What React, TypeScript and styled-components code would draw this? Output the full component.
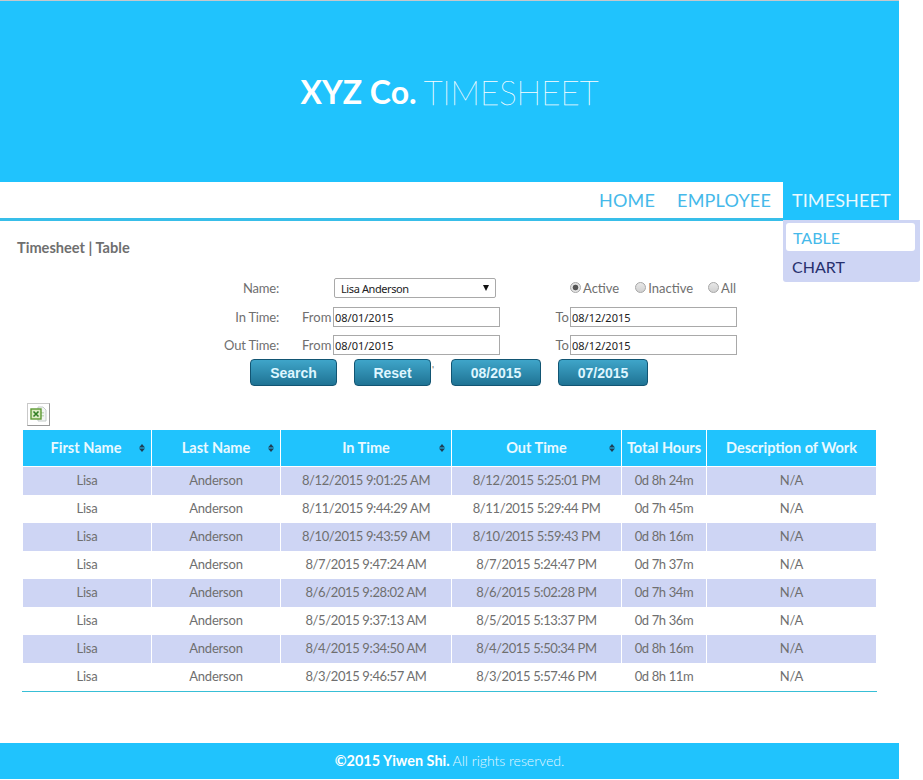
import React from 'react';
import styled, { createGlobalStyle } from 'styled-components';

const GlobalStyle = createGlobalStyle`
    html, body {
        margin: 0;
        padding: 0;
        background: #fff;
        font-family: Lato, "Open Sans", sans-serif;
        overflow: hidden;
    }
`;

const Page = styled.div`
    width: 899px;
    height: 780px;
    border-top: 1px solid #c4c8cc;
    box-sizing: border-box;
`;

const Banner = styled.header`
    height: 181px;
    background: #20c3fd;
    display: flex;
    align-items: center;
    justify-content: center;
    color: #fff;
`;

const BrandBold = styled.span`
    font-size: 32px;
    font-weight: 700;
    margin-right: 7px;
`;

const BrandLight = styled.span`
    font-size: 33px;
    font-weight: 100;
    color: #fff;
    -webkit-text-stroke: 0.25px #fff;
`;

const Nav = styled.nav`
    height: 36px;
    border-bottom: 3px solid #38bee9;
    display: flex;
    justify-content: flex-end;
    gap: 22px;
`;

const NavItem = styled.div`
    height: 36px;
    font-size: 18px;
    line-height: 36px;
    white-space: nowrap;
    color: #45b9ea;
    letter-spacing: 0.2px;
`;

const ActiveNavItem = styled(NavItem)`
    position: relative;
    height: 38px;
    width: 116px;
    margin-left: -10px;
    padding-left: 9px;
    box-sizing: border-box;
    color: #e9f9ff;
    background: #20c3fd;
    letter-spacing: 0.1px;
`;

const Dropdown = styled.div`
    position: absolute;
    top: 38px;
    left: 0;
    width: 137px;
    height: 62px;
    padding: 3px;
    box-sizing: border-box;
    background: #ced5f4;
    border-radius: 0 0 3px 3px;
    font-size: 16px;
    letter-spacing: 0;
`;

const DropItem = styled.div`
    height: 31px;
    line-height: 32px;
    padding-left: 6px;
    color: #27306e;
`;

const ActiveDropItem = styled(DropItem)`
    height: 28px;
    width: 129px;
    line-height: 30px;
    padding-left: 7px;
    box-sizing: border-box;
    border-radius: 3px;
    color: #45b9ea;
    background: #fff;
`;

const Content = styled.main`
    height: 522px;
    box-sizing: border-box;
`;

const Crumb = styled.h2`
    margin: 0;
    padding: 18px 0 0 17px;
    height: 57px;
    box-sizing: border-box;
    font-size: 14.6px;
    line-height: 17px;
    font-weight: 700;
    color: #6f6f6f;
`;

const FilterGrid = styled.div`
    display: grid;
    grid-template-columns: 79px 23px 31px 167px 70px 167px;
    grid-template-rows: 29px 28px 28px;
    margin-left: 200px;
    width: 537px;
    font-size: 13px;
    color: #6f6f6f;
`;

const Label = styled.div`
    text-align: right;
    line-height: 20px;
    white-space: nowrap;
`;

const LabelCell = styled(Label)`
    grid-column: 1;
    letter-spacing: -0.2px;
`;

const FromCell = styled(Label)`
    grid-column: 2 / 4;
    text-align: left;
    padding-left: 23px;
`;

const ToCell = styled(Label)`
    padding-right: 1px;
`;

const DateInput = styled.input`
    width: 167px;
    height: 20px;
    box-sizing: border-box;
    border: 1px solid #a9a9a9;
    padding: 1px 1px 0;
    margin: 0;
    font-family: "Noto Sans", sans-serif;
    font-size: 11px;
    color: #222;
    background: #fff;
    outline: none;
`;

const SelectWrap = styled.div`
    grid-column: 3 / 5;
    position: relative;
    margin-left: 32px;
    width: 162px;
    height: 20px;
`;

const NameSelect = styled.select`
    appearance: none;
    width: 162px;
    height: 20px;
    box-sizing: border-box;
    border: 1px solid #a9a9a9;
    border-radius: 2px;
    padding: 1px 0 0 6px;
    margin: 0;
    font-family: "Noto Sans", sans-serif;
    font-size: 11px;
    letter-spacing: -0.4px;
    color: #222;
    background: #fff;
`;

const SelectArrow = styled.svg`
    position: absolute;
    top: 7px;
    right: 7px;
    width: 6px;
    height: 6px;
    pointer-events: none;
`;

const RadioRow = styled.div`
    grid-column: 5 / 7;
    display: flex;
    align-items: flex-start;
    padding-left: 70px;
    line-height: 20px;
`;

const RadioItem = styled.label<{ $gap: number }>`
    display: flex;
    margin-right: ${p => p.$gap}px;
`;

const Radio = styled.input`
    appearance: none;
    width: 9px;
    height: 9px;
    margin: 4px 2px 0 0;
    border: 1px solid #a6a6a6;
    border-radius: 50%;
    box-sizing: content-box;
    background: linear-gradient(#e8e8e8, #d0d0d0);

    &:checked {
        background: radial-gradient(circle, #555 0 2.5px, #e4e4e4 3.2px);
    }
`;

const ButtonRow = styled.div`
    display: flex;
    margin: -4px 0 0 250px;
    height: 27px;
`;

const ActionButton = styled.button<{ $width: number; $gap: number }>`
    width: ${p => p.$width}px;
    margin-right: ${p => p.$gap}px;
    height: 27px;
    padding: 0;
    box-sizing: border-box;
    border: 1px solid #125573;
    border-radius: 4px;
    background: linear-gradient(#3fa5c9, #1f7394);
    color: #dff6ff;
    font-family: "Liberation Sans", Arial, sans-serif;
    font-size: 14px;
    font-weight: 700;
`;

const StrayMark = styled.span`
    width: 20px;
    padding-left: 1px;
    box-sizing: border-box;
    font-size: 10px;
    line-height: 20px;
    color: #666;
`;

const ExportRow = styled.div`
    margin: 17px 0 4px 27px;
    height: 23px;
`;

const ExportIcon = styled.div`
    width: 23px;
    height: 23px;
    box-sizing: border-box;
    border: 1px solid #c9c9c9;
    border-right-color: #999;
    border-bottom-color: #999;
    background: #fff;
    display: flex;
    align-items: center;
    justify-content: center;
`;

const Table = styled.table`
    margin-left: 22px;
    width: 855px;
    table-layout: fixed;
    border-collapse: separate;
    border-spacing: 0;
`;

const HeadCell = styled.th<{ $width: number }>`
    position: relative;
    width: ${p => p.$width}px;
    height: 37px;
    padding: 0 0 1px;
    box-sizing: border-box;
    background: #20c3fd;
    color: #e9f9ff;
    font-weight: 700;
    font-size: 14.5px;
    white-space: nowrap;
    border-left: 1px solid #fff;
    border-bottom: 1px solid #fff;

    &:last-child {
        border-right: 1px solid #fff;
    }
`;

const HeadLabel = styled.span<{ $shift: number }>`
    display: inline-block;
    transform: translateX(${p => p.$shift}px);
`;

const SortIcon = styled.svg`
    position: absolute;
    right: 6px;
    top: 14px;
    width: 6px;
    height: 8px;
`;

const Row = styled.tr<{ $odd: boolean }>`
    background: ${p => (p.$odd ? '#ced5f4' : '#fff')};
`;

const Cell = styled.td<{ $tight?: boolean }>`
    height: 28px;
    padding: 0 0 2px;
    box-sizing: border-box;
    text-align: center;
    color: #6f6f6f;
    font-size: 13px;
    letter-spacing: ${p => (p.$tight ? '-0.38px' : '-0.2px')};
    white-space: nowrap;
    border-left: 1px solid #fff;

    &:last-child {
        border-right: 1px solid #fff;
    }
`;

const TableRule = styled.td`
    height: 1px;
    padding: 0;
    background: #38bfd6;
`;

const Footer = styled.footer`
    height: 36px;
    padding-bottom: 1px;
    box-sizing: border-box;
    background: #20c3fd;
    display: flex;
    align-items: center;
    justify-content: center;
    font-size: 14px;
    color: #e6f8ff;
`;

const FooterBold = styled.span`
    font-weight: 700;
    font-size: 14.4px;
    color: #fff;
    margin-right: 3px;
`;

const FooterLight = styled.span`
    font-weight: 300;
`;

const columns = [
    { title: 'First Name', width: 129, sort: true, shift: -1 },
    { title: 'Last Name', width: 129, sort: true, shift: 0 },
    { title: 'In Time', width: 171, sort: true, shift: 0 },
    { title: 'Out Time', width: 170, sort: true, shift: 0 },
    { title: 'Total Hours', width: 85, sort: false, shift: 0 },
    { title: 'Description of Work', width: 171, sort: false, shift: 0 },
];

const rows = [
    ['8/12/2015 9:01:25 AM', '8/12/2015 5:25:01 PM', '0d 8h 24m'],
    ['8/11/2015 9:44:29 AM', '8/11/2015 5:29:44 PM', '0d 7h 45m'],
    ['8/10/2015 9:43:59 AM', '8/10/2015 5:59:43 PM', '0d 8h 16m'],
    ['8/7/2015 9:47:24 AM', '8/7/2015 5:24:47 PM', '0d 7h 37m'],
    ['8/6/2015 9:28:02 AM', '8/6/2015 5:02:28 PM', '0d 7h 34m'],
    ['8/5/2015 9:37:13 AM', '8/5/2015 5:13:37 PM', '0d 7h 36m'],
    ['8/4/2015 9:34:50 AM', '8/4/2015 5:50:34 PM', '0d 8h 16m'],
    ['8/3/2015 9:46:57 AM', '8/3/2015 5:57:46 PM', '0d 8h 11m'],
];

const Sort = () => (
    <SortIcon viewBox="0 0 6 8">
        <path d="M3 0 L6 3.4 H0 Z M0 4.6 H6 L3 8 Z" fill="#1f3f55" />
    </SortIcon>
);

const ExcelGlyph = () => (
    <svg width="17" height="17" viewBox="0 0 17 17">
        <path d="M8 1 H13 L16 4 V15 H8 Z" fill="#f3f5f4" stroke="#c3cbc8" />
        <rect x="10" y="6" width="4" height="1.5" fill="#c5dcc0" />
        <rect x="10" y="9" width="4" height="1.5" fill="#c5dcc0" />
        <rect x="1" y="3" width="10" height="10" fill="#dcebc4" stroke="#5d9a34" strokeWidth="1.4" />
        <path d="M3.5 5.5 L8.5 10.5 M8.5 5.5 L3.5 10.5" stroke="#2f7d23" strokeWidth="1.6" />
    </svg>
);

export default function App() {
    return <>
        <GlobalStyle />
        <Page>
            <Banner>
                <BrandBold>XYZ Co.</BrandBold>
                <BrandLight>TIMESHEET</BrandLight>
            </Banner>
            <Nav>
                <NavItem>HOME</NavItem>
                <NavItem>EMPLOYEE</NavItem>
                <ActiveNavItem>
                    TIMESHEET
                    <Dropdown>
                        <ActiveDropItem>TABLE</ActiveDropItem>
                        <DropItem>CHART</DropItem>
                    </Dropdown>
                </ActiveNavItem>
            </Nav>
            <Content>
                <Crumb>Timesheet | Table</Crumb>
                <FilterGrid>
                    <LabelCell>Name:</LabelCell>
                    <SelectWrap>
                        <NameSelect defaultValue="Lisa Anderson">
                            <option>Lisa Anderson</option>
                        </NameSelect>
                        <SelectArrow viewBox="0 0 6 6">
                            <path d="M0 0 H6 L3 6 Z" fill="#111" />
                        </SelectArrow>
                    </SelectWrap>
                    <RadioRow>
                        <RadioItem $gap={16}><Radio type="radio" name="status" defaultChecked />Active</RadioItem>
                        <RadioItem $gap={15}><Radio type="radio" name="status" />Inactive</RadioItem>
                        <RadioItem $gap={0}><Radio type="radio" name="status" />All</RadioItem>
                    </RadioRow>

                    <LabelCell>In Time:</LabelCell>
                    <FromCell>From</FromCell>
                    <DateInput defaultValue="08/01/2015" />
                    <ToCell>To</ToCell>
                    <DateInput defaultValue="08/12/2015" />

                    <LabelCell>Out Time:</LabelCell>
                    <FromCell>From</FromCell>
                    <DateInput defaultValue="08/01/2015" />
                    <ToCell>To</ToCell>
                    <DateInput defaultValue="08/12/2015" />
                </FilterGrid>
                <ButtonRow>
                    <ActionButton $width={87} $gap={17}>Search</ActionButton>
                    <ActionButton $width={77} $gap={0}>Reset</ActionButton>
                    <StrayMark>'</StrayMark>
                    <ActionButton $width={90} $gap={17}>08/2015</ActionButton>
                    <ActionButton $width={90} $gap={0}>07/2015</ActionButton>
                </ButtonRow>
                <ExportRow>
                    <ExportIcon><ExcelGlyph /></ExportIcon>
                </ExportRow>
                <Table>
                    <thead>
                        <tr>
                            {columns.map(c => (
                                <HeadCell key={c.title} $width={c.width}>
                                    <HeadLabel $shift={c.shift}>{c.title}</HeadLabel>
                                    {c.sort && <Sort />}
                                </HeadCell>
                            ))}
                        </tr>
                    </thead>
                    <tbody>
                        {rows.map((r, i) => (
                            <Row key={r[0]} $odd={i % 2 === 0}>
                                <Cell>Lisa</Cell>
                                <Cell>Anderson</Cell>
                                <Cell $tight>{r[0]}</Cell>
                                <Cell $tight>{r[1]}</Cell>
                                <Cell $tight>{r[2]}</Cell>
                                <Cell>N/A</Cell>
                            </Row>
                        ))}
                    </tbody>
                    <tfoot>
                        <tr>
                            <TableRule colSpan={6} />
                        </tr>
                    </tfoot>
                </Table>
            </Content>
            <Footer>
                <FooterBold>©2015 Yiwen Shi.</FooterBold>
                <FooterLight>All rights reserved.</FooterLight>
            </Footer>
        </Page>
    </>;
}
